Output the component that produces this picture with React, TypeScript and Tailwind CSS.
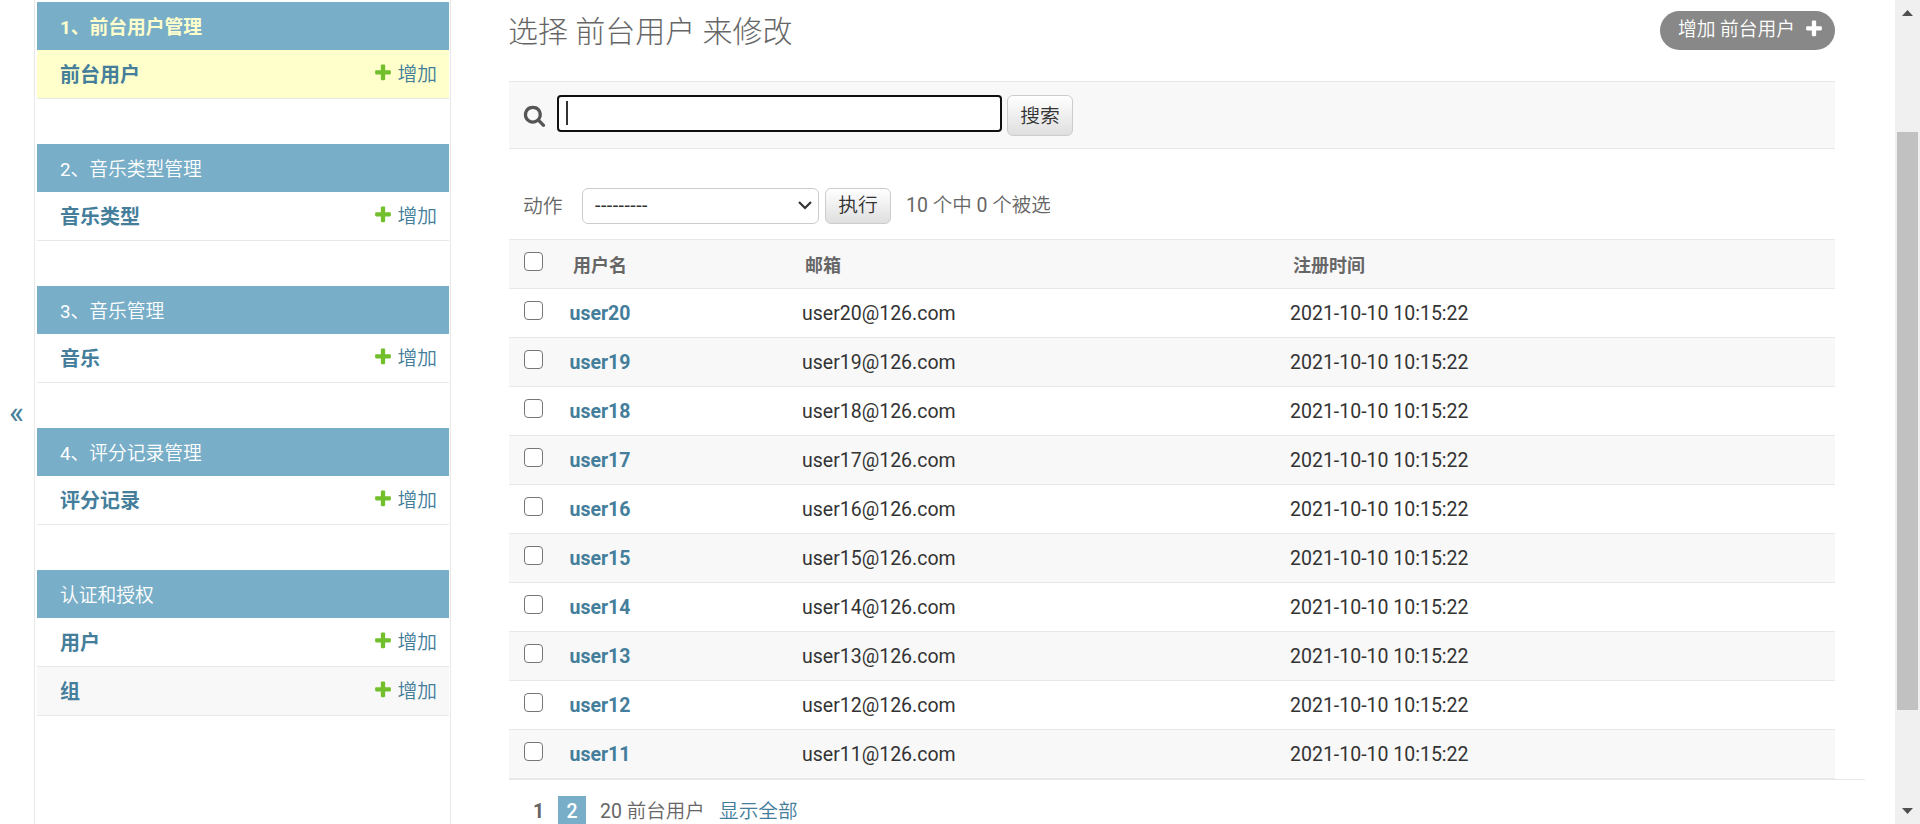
import React from 'react';

interface ModelItem {
  name: string;
  current?: boolean;
  shaded?: boolean;
}

interface AppModule {
  index?: string;
  title: string;
  current?: boolean;
  models: ModelItem[];
}

const modules: AppModule[] = [
  { index: '1', title: '、前台用户管理', current: true, models: [{ name: '前台用户', current: true }] },
  { index: '2', title: '、音乐类型管理', models: [{ name: '音乐类型' }] },
  { index: '3', title: '、音乐管理', models: [{ name: '音乐' }] },
  { index: '4', title: '、评分记录管理', models: [{ name: '评分记录' }] },
  { title: '认证和授权', models: [{ name: '用户' }, { name: '组', shaded: true }] },
];

const users = [20, 19, 18, 17, 16, 15, 14, 13, 12, 11].map((n) => ({
  name: `user${n}`,
  email: `user${n}@126.com`,
  created: '2021-10-10 10:15:22',
}));

function PlusIcon({ className }: { className: string }) {
  return (
    <svg viewBox="0 0 1792 1792" fill="currentColor" className={className}>
      <path d="M1600 736v192q0 40-28 68t-68 28h-416v416q0 40-28 68t-68 28h-192q-40 0-68-28t-28-68v-416h-416q-40 0-68-28t-28-68v-192q0-40 28-68t68-28h416v-416q0-40 28-68t68-28h192q40 0 68 28t28 68v416h416q40 0 68 28t28 68z" />
    </svg>
  );
}

function SearchIcon() {
  return (
    <svg viewBox="0 0 1792 1792" fill="currentColor" className="mb-[1px] h-[23px] w-[23px] shrink-0 text-[#555]">
      <path d="M1216 832q0-185-131.500-316.500t-316.500-131.500-316.500 131.500-131.500 316.500 131.500 316.500 316.500 131.500 316.500-131.500 131.500-316.500zm512 832q0 52-38 90t-90 38q-54 0-90-38l-343-342q-179 124-399 124-143 0-273.500-55.500t-225-150-150-225-55.500-273.500 55.500-273.500 150-225 225-150 273.500-55.500 273.500 55.500 225 150 150 225 55.500 273.500q0 220-124 399l343 343q37 37 37 90z" />
    </svg>
  );
}

function Sidebar() {
  return (
    <nav className="flex h-full w-[417px] shrink-0 flex-col gap-[45px] border-x border-[#e8e8e8] pl-[2px] pr-[1px] pt-[2px]">
      {modules.map((module) => (
        <section key={module.title}>
          <h2
            className={
              module.current
                ? 'flex h-12 items-center bg-[#79aec8] pl-[23px] pt-[3px] text-[18.75px] font-bold text-[#ffc]'
                : 'flex h-12 items-center bg-[#79aec8] pl-[23px] pt-[3px] text-[18.75px] font-[350] text-white'
            }
          >
            {module.index && <span className={module.current ? 'font-bold' : 'font-normal'}>{module.index}</span>}
            {module.title}
          </h2>
          {module.models.map((model) => (
            <div
              key={model.name}
              className={
                model.current
                  ? 'flex h-[49px] items-center justify-between border-b border-[#e8e8e8] bg-[#ffc] pl-[23px] pr-3'
                  : model.shaded
                    ? 'flex h-[49px] items-center justify-between border-b border-[#e8e8e8] bg-[#f8f8f8] pl-[23px] pr-3'
                    : 'flex h-[49px] items-center justify-between border-b border-[#e8e8e8] pl-[23px] pr-3'
              }
            >
              <a className="pt-[2px] text-[20px] font-bold text-[#447e9b]">{model.name}</a>
              <a className="flex items-center pt-[2px] text-[19.8px] font-[350] text-[#447e9b]">
                <PlusIcon className="mb-[4px] mr-[4px] h-[20px] w-[20px] text-[#70bf2b]" />
                增加
              </a>
            </div>
          ))}
        </section>
      ))}
    </nav>
  );
}

function Checkbox() {
  return (
    <input
      type="checkbox"
      className="mb-[5px] block h-[19px] w-[19px] appearance-none rounded-[4px] border border-[#767676] bg-white"
    />
  );
}

function ResultTable() {
  return (
    <div className="border-t border-[#e8e8e8]">
      <div className="grid h-[49px] grid-cols-[49px_232px_488px_1fr] items-center border-b border-[#e8e8e8] bg-[#f8f8f8] pl-[15px] text-[18px] font-bold text-[#666]">
        <Checkbox />
        <span className="mt-[3px]">用户名</span>
        <span className="mt-[3px]">邮箱</span>
        <span className="mt-[3px]">注册时间</span>
      </div>
      {users.map((user) => (
        <div
          key={user.name}
          className="grid h-[49px] grid-cols-[45px_233px_488px_1fr] items-center border-b border-[#e8e8e8] pl-[15px] text-[#333] odd:bg-[#f8f8f8] even:bg-white"
        >
          <Checkbox />
          <a className="mt-[2px] pl-[0.500px] font-bold text-[#447e9b]">{user.name}</a>
          <span className="mt-[2px]">{user.email}</span>
          <span className="mt-[2px]">{user.created}</span>
        </div>
      ))}
    </div>
  );
}

function Main() {
  return (
    <main className="flex min-w-0 flex-1 flex-col pl-[58px]">
      <header className="flex h-[81px] w-[1326px] shrink-0 items-start justify-between">
        <h1 className="-ml-px mt-[9px] text-[30px] font-light leading-[45px] text-[#666]">选择 前台用户 来修改</h1>
        <a className="mt-[11px] flex h-[39px] w-[175px] items-center rounded-full bg-[#888] pl-[18px] text-[18.75px] font-[350] text-white">
          <span className="whitespace-nowrap pb-[1px]">增加 前台用户</span>
          <PlusIcon className="mb-[3px] ml-[9px] h-[20px] w-[20px] shrink-0" />
        </a>
      </header>

      <div className="flex h-[68px] w-[1326px] shrink-0 items-start border-y border-[#e8e8e8] bg-[#f8f8f8] pl-[14px] pt-[13px]">
        <div className="flex h-[41px] items-center">
          <SearchIcon />
        </div>
        <div className="ml-[11px] flex h-[37px] w-[445px] items-center rounded-[4px] border-2 border-[#101010] bg-white pl-[7px]">
          <span className="mb-[1px] h-6 w-[2px] bg-[#333]" />
        </div>
        <button className="ml-[5px] h-[41px] w-[66px] rounded-[6px] border border-[#ccc] bg-linear-to-b from-white to-[#dfdfdf] pt-[2px] text-[19.8px] font-[350] text-[#333]">
          搜索
        </button>
      </div>

      <div className="flex h-[90px] w-[1326px] shrink-0 items-center pl-[14px] pt-[24px] font-[350] text-[#666]">
        <span className="w-[39px] whitespace-nowrap pt-[2px] text-[19.8px]">动作</span>
        <div className="-mt-px ml-[20px] flex h-9 w-[237px] items-center justify-between rounded-[6px] border border-[#ccc] bg-white pl-3 pr-[6px] font-normal text-[#333]">
          <span className="pt-[1px] tracking-[0.5px]">---------</span>
          <svg viewBox="0 0 14 9" fill="none" stroke="#333" strokeWidth="2.2" className="h-[9px] w-[14px]">
            <path d="M1 1l6 6 6-6" />
          </svg>
        </div>
        <button className="-mt-px ml-[6px] h-9 w-[66px] rounded-[6px] border border-[#ccc] bg-linear-to-b from-white to-[#dfdfdf] text-[19.8px] font-[350] text-[#333]">
          执行
        </button>
        <span className="ml-[15px]">
          <span className="font-normal">10</span> 个中 <span className="font-normal">0</span> 个被选
        </span>
      </div>

      <div className="w-[1326px] shrink-0">
        <ResultTable />
      </div>

      <footer className="flex h-[61px] w-[1356px] shrink-0 items-start border-t border-[#e8e8e8] pt-4 leading-[31px] text-[#666]">
        <span className="ml-[24px] w-[25px] font-bold">1</span>
        <a className="flex h-7 w-7 items-center justify-center bg-[#79aec8] pt-[2px] font-medium text-white">2</a>
        <span className="ml-[14px] w-[105px] whitespace-nowrap font-[350]">
          <span className="font-normal">20</span> 前台用户
        </span>
        <a className="ml-[14px] text-[19.7px] font-[350] text-[#447e9b]">显示全部</a>
      </footer>
    </main>
  );
}

function Scrollbar() {
  return (
    <div className="flex h-full w-[25px] shrink-0 flex-col items-center bg-[#f0f0f0]">
      <svg viewBox="0 0 11 6" fill="#505050" className="mt-[10px] h-[6px] w-[11px] shrink-0">
        <path d="M5.500 0L11 6H0z" />
      </svg>
      <div className="mt-[116px] h-[578px] w-[21px] shrink-0 bg-[#c1c1c1]" />
      <svg viewBox="0 0 11 6" fill="#505050" className="mt-[98px] h-[6px] w-[11px] shrink-0">
        <path d="M0 0h11L5.500 6z" />
      </svg>
    </div>
  );
}

export default function App() {
  return (
    <div className="flex h-[824px] w-[1920px] overflow-hidden bg-white font-[Roboto,'Noto_Sans_CJK_SC',sans-serif] text-[19.5px] leading-[28px]">
      <div className="flex h-full w-[34px] shrink-0 items-center justify-center pr-[1px]">
        <span className="text-[32px] text-[#447e9b]">«</span>
      </div>
      <Sidebar />
      <Main />
      <Scrollbar />
    </div>
  );
}
